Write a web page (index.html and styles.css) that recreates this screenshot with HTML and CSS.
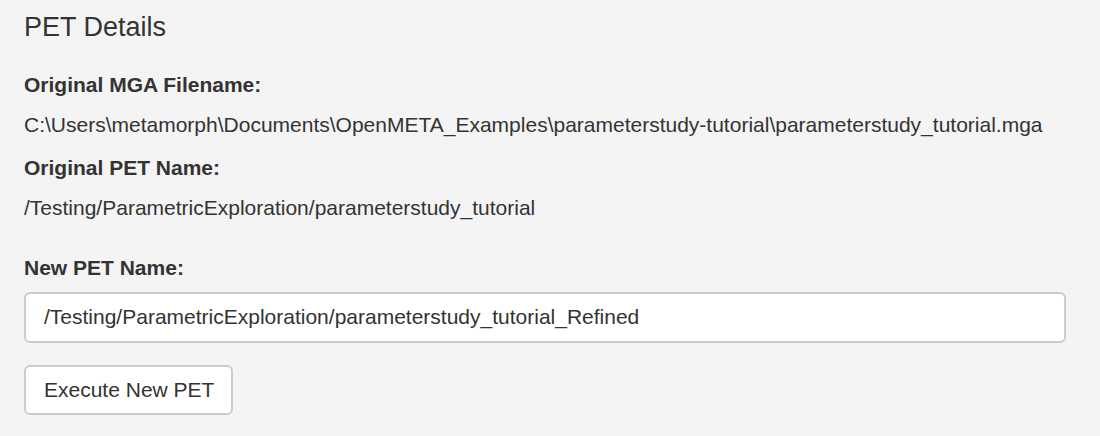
FILE: index.html
```html
<!DOCTYPE html>
<html>
<head>
<meta charset="utf-8">
<link rel="stylesheet" href="styles.css">
</head>
<body>
<div class="panel">
  <h4 class="title">PET Details</h4>
  <div class="label first">Original MGA Filename:</div>
  <div class="value">C:\Users\metamorph\Documents\OpenMETA_Examples\parameterstudy-tutorial\parameterstudy_tutorial.mga</div>
  <div class="label">Original PET Name:</div>
  <div class="value">/Testing/ParametricExploration/parameterstudy_tutorial</div>
  <div class="form-group">
    <label class="label new" for="newname">New PET Name:</label>
    <input id="newname" class="input" type="text" value="/Testing/ParametricExploration/parameterstudy_tutorial_Refined">
  </div>
  <button class="btn" type="button">Execute New PET</button>
</div>
</body>
</html>
```

FILE: styles.css
```css
html, body {
  margin: 0;
  padding: 0;
  background: #f4f4f4;
}
body {
  font-family: "Liberation Sans", Arial, sans-serif;
  color: #333333;
  font-size: 21px;
}
.panel {
  padding: 13px 24px 0 24px;
  width: 1042px;
}
.title {
  margin: 0;
  font-size: 27px;
  font-weight: normal;
  line-height: 29.7px;
}
.label {
  display: block;
  font-weight: bold;
  line-height: 30px;
  margin-top: 13px;
}
.label.first {
  margin-top: 27px;
}
.value {
  line-height: 30px;
  margin-top: 10px;
}
.form-group {
  margin-top: 30px;
  display: flex;
  flex-direction: column;
}
.label.new {
  margin-top: 0;
  margin-bottom: 9px;
}
.input {
  box-sizing: border-box;
  height: 51px;
  width: 100%;
  padding: 0 18px;
  border: 2px solid #cccccc;
  border-radius: 6px;
  background: #ffffff;
  font-family: "Liberation Sans", Arial, sans-serif;
  font-size: 21px;
  color: #333333;
  outline: none;
}
.btn {
  display: block;
  box-sizing: border-box;
  margin-top: 22px;
  height: 50px;
  padding: 0 17px 0 18px;
  border: 2px solid #cccccc;
  border-radius: 6px;
  background: #ffffff;
  font-family: "Liberation Sans", Arial, sans-serif;
  font-size: 21px;
  color: #333333;
  line-height: 46px;
}
```
